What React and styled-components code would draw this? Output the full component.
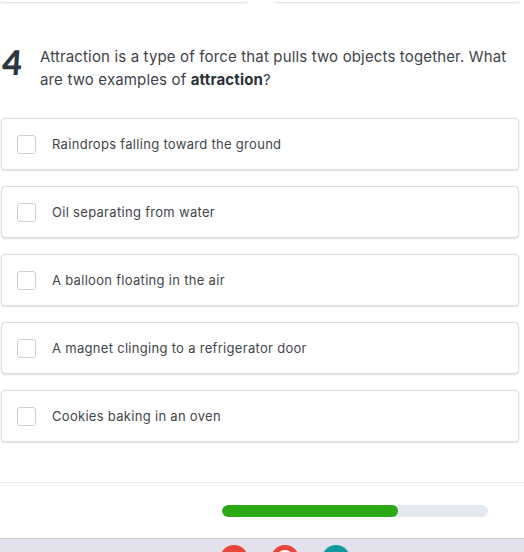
import React from "react";
import styled, { createGlobalStyle } from "styled-components";

const GlobalStyle = createGlobalStyle`
  html, body {
    margin: 0;
    padding: 0;
    background: #ffffff;
  }
  body {
    font-family: "Inter", "Liberation Sans", sans-serif;
    overflow: hidden;
  }
`;

const Page = styled.div`
  width: 524px;
  height: 552px;
  display: flex;
  flex-direction: column;
  overflow: hidden;
`;

const TopRow = styled.div`
  display: flex;
  gap: 26px;
  height: 2px;
`;

const TopCard = styled.div`
  width: ${(p) => p.$w}px;
  height: 2px;
  background: #fff;
  border-bottom: 1px solid #e6e6e6;
  border-radius: 0 0 4px 4px;
  box-shadow: 0 1px 2px rgba(0, 0, 0, 0.06);
`;

const Question = styled.div`
  display: flex;
  padding: 43px 14px 0 2px;
`;

const Number = styled.div`
  width: 38px;
  flex-shrink: 0;
  font-family: "Lato", "Liberation Sans", sans-serif;
  font-weight: 900;
  font-size: 34px;
  line-height: 34px;
  color: #2f3640;
  transform: skewX(-4deg);
`;

const Prompt = styled.div`
  font-size: 15px;
  letter-spacing: 0.15px;
  line-height: 23px;
  color: #3f444b;
  b {
    font-weight: 700;
    color: #2b3038;
  }
`;

const Options = styled.div`
  display: flex;
  flex-direction: column;
  gap: 16px;
  padding: 27px 5px 0 1px;
`;

const Option = styled.div`
  height: 50px;
  display: flex;
  align-items: center;
  gap: 16px;
  padding-left: 15px;
  border: 1px solid #dcdcdc;
  border-radius: 4px;
  box-shadow: 0 1px 2px rgba(0, 0, 0, 0.12);
  background: #fff;
`;

const Box = styled.div`
  width: 17px;
  height: 17px;
  border: 1px solid #cfcfcf;
  border-radius: 3px;
  background: #fff;
`;

const Label = styled.span`
  font-size: 13px;
  letter-spacing: 0.3px;
  color: #42464c;
`;

const Footer = styled.div`
  margin-top: auto;
  border-top: 1px solid #e8eaf0;
  height: 55px;
  display: flex;
  align-items: center;
  padding-left: 222px;
`;

const Track = styled.div`
  width: 266px;
  height: 12px;
  border-radius: 6px;
  background: #e4e8ef;
  overflow: hidden;
`;

const Fill = styled.div`
  height: 100%;
  border-radius: 6px;
  background: #2aa914;
`;

const BottomBar = styled.div`
  box-sizing: border-box;
  height: 14px;
  background: #e3e1ea;
  border-top: 1px solid #cfcdd6;
  display: flex;
  justify-content: center;
  gap: 23px;
  padding-top: 6px;
  padding-left: 46px;
  overflow: hidden;
`;

const Dot = styled.div`
  width: 28px;
  height: 28px;
  border-radius: 50%;
  flex-shrink: 0;
  background: ${(p) => p.$color};
  box-sizing: border-box;
  ${(p) => (p.$ring ? `border: 5px solid ${p.$color}; background: #fff;` : "")}
`;

const options = [
  "Raindrops falling toward the ground",
  "Oil separating from water",
  "A balloon floating in the air",
  "A magnet clinging to a refrigerator door",
  "Cookies baking in an oven",
];

export default function App() {
  const progress = 0.66;
  return (
    <>
      <GlobalStyle />
      <Page>
        <TopRow>
          <TopCard $w={248} />
          <TopCard $w={246} />
        </TopRow>
        <Question>
          <Number>4</Number>
          <Prompt>
            Attraction is a type of force that pulls two objects together. What
            are two examples of <b>attraction</b>?
          </Prompt>
        </Question>
        <Options>
          {options.map((o) => (
            <Option key={o}>
              <Box />
              <Label>{o}</Label>
            </Option>
          ))}
        </Options>
        <Footer>
          <Track>
            <Fill style={{ width: `${progress * 100}%` }} />
          </Track>
        </Footer>
        <BottomBar>
          <Dot $color="#e8463a" />
          <Dot $color="#e8463a" $ring />
          <Dot $color="#11999b" />
        </BottomBar>
      </Page>
    </>
  );
}
